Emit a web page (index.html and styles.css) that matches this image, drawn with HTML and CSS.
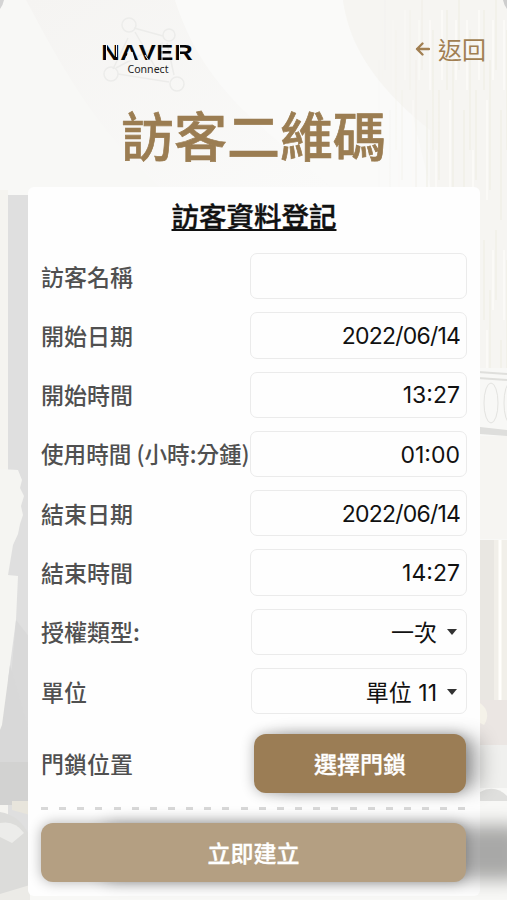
FILE: index.html
```html
<!DOCTYPE html>
<html lang="zh-Hant">
<head>
  <meta charset="UTF-8">
  <meta name="viewport" content="width=device-width, initial-scale=1.0">
  <title>訪客二維碼</title>
  <link rel="stylesheet" href="styles.css">
</head>
<body>
  <!-- Lobby background -->
  <svg class="backdrop" viewBox="0 0 507 900" preserveAspectRatio="none" aria-hidden="true">
    <defs>
      <linearGradient id="ceiling" x1="0" y1="0" x2="1" y2="1">
        <stop offset="0" stop-color="#f5f4f2"/>
        <stop offset="1" stop-color="#fafaf9"/>
      </linearGradient>
      <pattern id="strands" width="37" height="230" patternUnits="userSpaceOnUse">
        <path d="M3 10V90M9 60V190M15 0V70M20 110V220M26 30V150M32 90V180" stroke="#f1efe8" stroke-width="1.5"/>
        <path d="M6 100V200M12 20V80M23 20V90M29 150V230M35 10V80" stroke="#fbfaf7" stroke-width="2"/>
      </pattern>
      <linearGradient id="fade" x1="0" y1="0" x2="1" y2="0">
        <stop offset="0" stop-color="#000"/>
        <stop offset=".5" stop-color="#fff"/>
      </linearGradient>
      <mask id="strand-mask"><rect x="378" width="129" height="368" fill="url(#fade)"/></mask>
    </defs>
    <rect width="507" height="900" fill="#f8f8f6"/>
    <path d="M26 0H175C190 45 220 80 253 108L330 187H160C95 130 58 60 26 0Z" fill="url(#ceiling)"/>
    <path d="M175 0H343C350 50 375 80 410 105L430 187H330C270 130 205 95 175 0Z" fill="#fafaf9"/>
    <path d="M343 0H507V368H430V130C380 90 350 50 343 0Z" fill="#f6f5f2"/>
    <rect x="378" width="129" height="368" fill="url(#strands)" mask="url(#strand-mask)"/>
    <!-- Left wall and curtain -->
    <path d="M0 190H8V900H0Z" fill="#f5f4f0"/>
    <path d="M8 195H30V900H8Z" fill="#dfdfdf"/>
    <path d="M0 469L18 470L22 480L20 488L24 496L21 506L23 515L20 524L18 534L13 545L8 575L18 576L16 620L10 665L2 725L0 730Z" fill="#f5f5f2"/>
    <path d="M16 620L30 638V735L10 690Z" fill="#d9d9d9"/>
    <path d="M2 725L10 665L30 735V805H0V730Z" fill="#d8d8d8"/>
    <path d="M0 762H30V805H0Z" fill="#d2d2d1"/>
    <path d="M12 801H30V815L12 810Z" fill="#e8e5dc"/>
    <path d="M0 812Q20 815 30 837V888L0 895Z" fill="#dcdcda"/>
    <path d="M0 823Q15 820 24 833L12 843L0 837Z" fill="#ececea"/>
    <path d="M0 894L30 885V900H0Z" fill="#ecebe7"/>
    <!-- Balcony and doorway -->
    <path d="M478 372L507 374M478 378L507 380" stroke="#dfdfdc" stroke-width="2"/>
    <ellipse cx="491" cy="403" rx="7" ry="20" fill="none" stroke="#e3e3e0"/>
    <ellipse cx="510" cy="403" rx="6" ry="20" fill="none" stroke="#e3e3e0"/>
    <path d="M480 427L507 430V436L480 434Z" fill="#dededc"/>
    <path d="M480 436H507V539H480Z" fill="#f6f5f2"/>
    <path d="M480 540H494V700H480Z" fill="#e9e7e2"/>
    <path d="M494 540H507V700H494Z" fill="#f1efe9"/>
    <path d="M500 540V700" stroke="#fffefb" stroke-width="3"/>
    <path d="M480 700H507V745H480Z" fill="#ebe6e3"/>
    <path d="M480 703Q492 712 484 725L480 723Z" fill="#f5f2e9"/>
    <path d="M480 745H507V788H480Z" fill="#f0f0ee"/>
    <path d="M480 792Q495 784 507 796V801H480Z" fill="#dfdfdd"/>
    <path d="M0 0H4Q3 5 0 9Z" fill="#d4d4d4"/>
    <path d="M503 0H507V9Q504 5 503 0Z" fill="#cdcdcd"/>
  </svg>

  <div class="page">
    <!-- Header Section -->
    <header class="header">
      <svg class="logo" width="104" height="84" viewBox="0 0 104 84">
        <g class="logo-net">
          <path d="M35 24L58 64M28 30L13 61M34 20L63 28M67 35L74 67M18 66L69 74M16 60L63 35"/>
          <circle cx="29" cy="17" r="7"/>
          <circle cx="69" cy="27" r="6"/>
          <circle cx="11" cy="66" r="7"/>
          <circle cx="77" cy="76" r="7"/>
        </g>
        <text class="logo-name" x="1 17.500 33.500 48.500 64" y="52" transform="scale(1.16 1)">NAVER</text>
        <path class="logo-fill" d="M28 44H32.500L35 52.500H25Z"/>
        <path class="logo-cut" d="M6.500 37V53M16.500 35V49M49 53L45 47M62 35V53M79.500 35V53"/>
        <text class="logo-sub" x="27.500" y="65" textLength="41" lengthAdjust="spacingAndGlyphs">Connect</text>
      </svg>
      <a class="back" href="#">
        <svg width="15" height="14" viewBox="0 0 15 14">
          <path d="M14 7H2M7.500 1.500L2 7L7.500 12.500"/>
        </svg>
        <span>返回</span>
      </a>
    </header>

    <h1>訪客二維碼</h1>

    <!-- Visitor Form -->
    <form class="card">
      <h2>訪客資料登記</h2>
      <div class="row">
        <label for="name">訪客名稱</label>
        <input id="name" class="field" type="text">
      </div>
      <div class="row">
        <label for="start-date">開始日期</label>
        <input id="start-date" class="field date" type="text" value="2022/06/14">
      </div>
      <div class="row">
        <label for="start-time">開始時間</label>
        <input id="start-time" class="field" type="text" value="13:27">
      </div>
      <div class="row">
        <label class="long" for="duration">使用時間 (小時:分鍾)</label>
        <input id="duration" class="field" type="text" value="01:00">
      </div>
      <div class="row">
        <label for="end-date">結束日期</label>
        <input id="end-date" class="field date" type="text" value="2022/06/14">
      </div>
      <div class="row">
        <label for="end-time">結束時間</label>
        <input id="end-time" class="field" type="text" value="14:27">
      </div>
      <div class="row">
        <label>授權類型:</label>
        <div class="field select" tabindex="0">
          <span>一次</span>
          <span class="caret"></span>
        </div>
      </div>
      <div class="row">
        <label>單位</label>
        <div class="field select" tabindex="0">
          <span>單位 11</span>
          <span class="caret"></span>
        </div>
      </div>
      <div class="row lock-row">
        <label>門鎖位置</label>
        <button class="btn btn-lock" type="button">選擇門鎖</button>
      </div>
      <div class="divider"></div>
      <button class="btn btn-submit" type="button">立即建立</button>
    </form>
  </div>
</body>
</html>
```
FILE: styles.css
```css
/* General Reset */
* {
  box-sizing: border-box;
}

body {
  margin: 0;
  height: 900px;
  overflow: hidden;
  background-color: #f8f8f6;
  font-family: Inter, "Noto Sans CJK TC", sans-serif;
}

.backdrop {
  position: absolute;
  top: 0;
  left: 0;
  width: 507px;
  height: 900px;
  z-index: -1;
}

.page {
  width: 507px;
  height: 900px;
  overflow: hidden;
}

/* Header Section */
.header {
  display: flex;
  justify-content: space-between;
  height: 100px;
  padding: 8px 21px 0 100px;
}

.logo-net {
  fill: none;
  stroke: #ececea;
  stroke-width: 1.5;
}

.logo-name {
  font: 700 22px "Liberation Sans", sans-serif;
  fill: #050505;
}

.logo-fill {
  fill: #f7f7f5;
}

.logo-cut {
  fill: none;
  stroke: #f7f7f5;
  stroke-width: 1;
}

.logo-sub {
  font: 400 10.5px "Noto Sans", sans-serif;
  fill: #222;
}

.back {
  display: flex;
  align-items: center;
  gap: 8px;
  height: 82px;
  color: #a17f52;
  font-size: 24px;
  text-decoration: none;
}

.back svg {
  fill: none;
  stroke: #a17f52;
  stroke-width: 2.3;
  stroke-linecap: round;
  stroke-linejoin: round;
}

.back span {
  margin-top: -2px;
}

h1 {
  margin: 0;
  height: 87px;
  line-height: 77px;
  text-align: center;
  font-size: 53px;
  font-weight: 500;
  color: #9b7d52;
  -webkit-text-stroke: 0.7px #9b7d52;
}

/* Visitor Form */
.card {
  display: flex;
  flex-direction: column;
  gap: 13px;
  width: 452px;
  height: 709px;
  margin-left: 28px;
  padding: 12px 13px 0 13px;
  border-radius: 6px;
  background-color: #fefefe;
}

h2 {
  margin: 0;
  height: 41px;
  line-height: 37px;
  text-align: center;
  font-size: 27.5px;
  font-weight: 500;
  color: #111;
  -webkit-text-stroke: 0.4px #111;
  text-decoration: underline;
  text-decoration-thickness: 2px;
  text-underline-offset: 2px;
}

.row {
  display: flex;
  align-items: center;
  justify-content: space-between;
  height: 46.300px;
}

.row label {
  margin-top: -1px;
  font-family: "Noto Sans CJK TC", sans-serif;
  font-size: 23px;
  font-weight: 500;
  color: #505050;
  white-space: nowrap;
}

.row .long {
  font-size: 22.600px;
}

.field {
  flex: none;
  width: 217px;
  height: 46.300px;
  padding: 1px 6px 0;
  border: 1px solid #ebebeb;
  border-radius: 7px;
  background-color: #fefefe;
  color: #111;
  font-family: Inter, "Noto Sans CJK TC", sans-serif;
  font-size: 23px;
  text-align: right;
}

.date {
  letter-spacing: -0.8px;
}

.select {
  display: flex;
  align-items: center;
  justify-content: flex-end;
  gap: 10px;
  width: 216px;
  padding-right: 9px;
}

.select span:first-child {
  margin-top: -2px;
}

.caret {
  border-top: 6px solid #333;
  border-left: 5px solid transparent;
  border-right: 5px solid transparent;
}

/* Buttons */
.btn {
  height: 59px;
  padding-bottom: 3px;
  border: 0;
  border-radius: 12px;
  color: #fff;
  font-family: Inter, "Noto Sans CJK TC", sans-serif;
  font-size: 23px;
  font-weight: 500;
  -webkit-text-stroke: 0.3px #fff;
}

.lock-row {
  height: 59px;
  margin-top: 7px;
}

.btn-lock {
  width: 212px;
  margin-right: 1px;
  background-color: #9b7d55;
  box-shadow: 0 0 13px rgba(0, 0, 0, 0.3), 18px 0 20px -4px rgba(0, 0, 0, 0.3);
}

.divider {
  height: 3px;
  margin-top: 1px;
  background: repeating-linear-gradient(to right, #d8d8d8 0 7px, transparent 7px 18.150px);
}

.btn-submit {
  flex: none;
  margin-right: 1px;
  background-color: #b49f82;
  box-shadow: 0 0 13px rgba(0, 0, 0, 0.3), 60px 0 18px -2px rgba(0, 0, 0, 0.32);
}
```
